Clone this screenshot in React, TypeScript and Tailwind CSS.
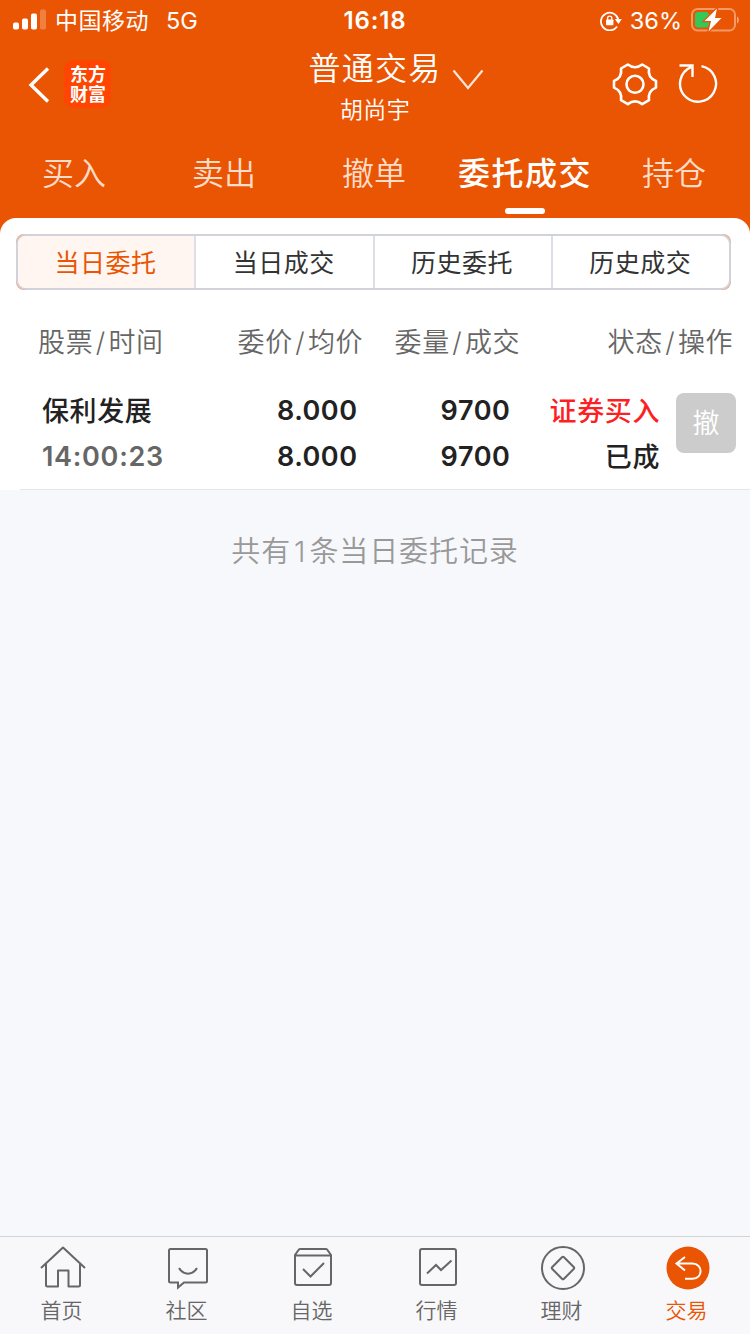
import React from "react";

const sans = "font-['Inter','Noto_Sans_CJK_SC',sans-serif]";

const tabs = ["买入", "卖出", "撤单", "委托成交", "持仓"];
const segments = ["当日委托", "当日成交", "历史委托", "历史成交"];

function StatusBar() {
  return (
    <div className="flex h-10 items-center text-white">
      <div className="flex w-[250px] items-center pl-[13px]">
        <svg width="33" height="22" viewBox="0 0 33 22" fill="#fff">
          <rect x="0" y="13.5" width="6" height="7" rx="1.8" />
          <rect x="9" y="9.500" width="6" height="11" rx="1.8" />
          <rect x="18" y="4.500" width="6" height="16" rx="1.8" />
          <rect x="27" y="0.500" width="6" height="20" rx="1.8" opacity="0.25" />
        </svg>
        <span className="ml-[9px] pt-0.5 text-[23px] leading-10 tracking-[0.5px] whitespace-nowrap">中国移动</span>
        <span className="ml-[17px] pt-0.5 text-[23.500px] leading-10">5G</span>
      </div>
      <div className="w-[250px] pt-0.5 text-center text-[24px] leading-10 font-semibold tracking-[0.9px]">16:18</div>
      <div className="flex w-[250px] items-center justify-end pr-[11px]">
        <svg className="mr-[8px] mt-0.5" width="22" height="20" viewBox="0 0 22 20" fill="none" stroke="#fff">
          <path d="M17 15.5A8.800 8.800 0 1 1 18.300 8.500" strokeWidth="1.8" />
          <path d="M14.800 8H21.800L18.500 13Z" fill="#fff" stroke="none" />
          <rect x="6" y="8.500" width="7.400" height="5.800" rx="0.8" fill="#fff" stroke="none" />
          <path d="M7.600 9V7.200a2.100 2.100 0 0 1 4.200 0V9" strokeWidth="1.3" />
        </svg>
        <span className="mr-[9px] pt-0.5 text-[23.500px] leading-10">36%</span>
        <svg width="48" height="24" viewBox="0 0 48 24">
          <rect x="1" y="1" width="43" height="21.5" rx="5.5" fill="none" stroke="#fff" strokeOpacity="0.4" strokeWidth="2" />
          <path d="M46 8.5c2.4 1 2.4 6 0 7Z" fill="#fff" fillOpacity="0.5" />
          <rect x="4" y="4" width="14" height="15.5" rx="3" fill="#34c759" />
          <path d="M26 0.5L13.5 13H20L17.5 23.5L30.500 10H24Z" fill="#fff" stroke="#ea5504" strokeWidth="2.4" paintOrder="stroke" />
        </svg>
      </div>
    </div>
  );
}

function TitleBar() {
  return (
    <div className="flex h-[90px] text-white">
      <div className="flex w-[250px] items-start pt-5 pl-7">
        <svg className="mt-[7px]" width="22" height="36" viewBox="0 0 22 36" fill="none" stroke="#fff" strokeWidth="3.4">
          <path d="M20 1.500L3 18L20 34.500" />
        </svg>
        <div className="ml-[14px] flex h-12 w-[47px] flex-col items-center justify-center rounded-[9px] bg-[#ff4600] pt-px pl-px text-[18px] leading-[20px] font-bold">
          <span>东方</span>
          <span>财富</span>
        </div>
      </div>
      <div className="flex w-[250px] justify-center">
        <div className="flex w-[134px] shrink-0 flex-col items-center">
          <span className="mt-[8px] text-[32px] leading-[42px] font-[350] tracking-[1.3px] whitespace-nowrap">普通交易</span>
          <span className="mt-[3px] text-[23px] leading-[34px] font-[350] tracking-[0.4px]">胡尚宇</span>
        </div>
      </div>
      <div className="flex w-[250px] items-start pt-[22px]">
        <svg className="-ml-12 mt-[7px] shrink-0" width="32" height="22" viewBox="0 0 32 22" fill="none" stroke="#fff" strokeOpacity="0.85" strokeWidth="2.2">
          <path d="M1.500 1.500L16 19L30.500 1.500" />
        </svg>
        <svg className="ml-[128px] shrink-0" width="46" height="46" viewBox="0 0 46 46" fill="none" stroke="#fff" strokeWidth="2.600" strokeLinejoin="round">
          <path d="M2 19Q10.500 15.500 9 6.500L15.800 2.500Q23 8 30.200 2.500L37 6.500Q35.500 15.500 44 19V25.600Q35.500 29.100 37 38.100L30.200 42.100Q23 36.600 15.800 42.100L9 38.100Q10.500 29.100 2 25.600Z" />
          <circle cx="23" cy="22.300" r="8.500" />
        </svg>
        <svg className="ml-[19px] mt-px shrink-0" width="42" height="42" viewBox="0 0 42 42" fill="none" stroke="#fff" strokeWidth="2.400">
          <path d="M24.500 3.100A18 18 0 1 1 14 4.200M2.500 2.500H15.500V14" />
        </svg>
      </div>
    </div>
  );
}

function Tabs() {
  return (
    <div className="grid h-[88px] grid-cols-5">
      {tabs.map((t) =>
        t === "委托成交" ? (
          <div key={t} className="flex flex-col items-center text-white">
            <span className="mt-[20px] text-[32px] leading-[48px] font-medium tracking-[1.5px]">{t}</span>
            <span className="mt-[10px] h-1.5 w-10 rounded-full bg-white" />
          </div>
        ) : (
          <div key={t} className="mt-[20px] -ml-0.5 text-center text-[32px] leading-[48px] font-[350] text-[#ffdcc9]">{t}</div>
        ),
      )}
    </div>
  );
}

function Segments() {
  return (
    <div className="mr-[19px] ml-4 h-14 overflow-hidden rounded-[8px] bg-[#f0a585]">
      <div className="flex h-14 overflow-hidden rounded-[10px] border-2 border-[#d0d4da] bg-white">
        {segments.map((s, i) => (
          <div
            key={s}
            className={
              i === 0
                ? "flex-1 bg-[#fff5f1] pt-px pr-px text-center text-[25px] leading-[52px] tracking-[0.5px] text-[#ea5504]"
                : "flex-1 border-l-2 border-[#dcdfe5] pt-px pr-px text-center text-[25px] leading-[52px] tracking-[0.5px] text-[#333]"
            }
          >
            {s}
          </div>
        ))}
      </div>
    </div>
  );
}

function Pair({ a, b }: { a: string; b: string }) {
  return (
    <span className="flex whitespace-nowrap">
      <span>{a}</span>
      <span className="mx-0.5 w-[11px] text-center">/</span>
      <span>{b}</span>
    </span>
  );
}

function Orders() {
  return (
    <>
      <div className="flex h-[42px] pl-[38px] text-[27px] leading-[42px] font-[350] tracking-[0.7px] text-[#666]">
        <div className="w-[199.500px]"><Pair a="股票" b="时间" /></div>
        <div className="w-[157px]"><Pair a="委价" b="均价" /></div>
        <div className="w-[213px]"><Pair a="委量" b="成交" /></div>
        <div><Pair a="状态" b="操作" /></div>
      </div>
      <div className="mt-[24px] flex h-[101px] text-[27px] leading-[46px] font-semibold text-[#222]">
        <div className="w-[200px] pl-[42px]">
          <div className="pt-px leading-[45px] font-medium tracking-[0.6px]">保利发展</div>
          <div className="tracking-[0.7px] text-[#666]">14:00:23</div>
        </div>
        <div className="w-[157.500px] text-right tracking-[0.5px]">
          <div>8.000</div>
          <div>8.000</div>
        </div>
        <div className="w-[153px] text-right tracking-[0.6px]">
          <div>9700</div>
          <div>9700</div>
        </div>
        <div className="w-[149.500px] pt-px text-right font-medium tracking-[0.6px]">
          <div className="text-[#fd1f24]">证券买入</div>
          <div>已成</div>
        </div>
        <div className="mt-[5px] ml-4 h-[60px] w-[60px] rounded-lg bg-[#ccc] pt-px text-center text-[27px] leading-[60px] font-[350] text-white">撤</div>
      </div>
      <div className="ml-5 h-px bg-[#e6e7ea]" />
    </>
  );
}

const home = (
  <svg width="46" height="44" viewBox="0 0 46 44" fill="none" stroke="#666" strokeWidth="2">
    <path d="M1 22L23 1.500L45 22M6 18V39Q6 40.500 7.500 40.500H18V24.500H28.500V40.500H38.500Q40 40.500 40 39V18" strokeLinejoin="round" />
  </svg>
);
const chat = (
  <svg width="46" height="44" viewBox="0 0 46 44" fill="none" stroke="#666" strokeWidth="2">
    <path d="M5.500 3H40.500Q42 3 42 4.500V35Q42 36.500 40.500 36.500H19L13 41.500V36.500H5.500Q4 36.500 4 35V4.500Q4 3 5.500 3Z" />
    <path d="M14 22C18.500 29.500 27.500 29.500 32 22" />
  </svg>
);
const box = (
  <svg width="46" height="44" viewBox="0 0 46 44" fill="none" stroke="#666" strokeWidth="2">
    <path d="M5 9L8.500 4Q9 3 10 3H36Q37 3 37.500 4L41 9V37Q41 39 39 39H7Q5 39 5 37ZM5 9.500H41M13 23L20.500 30.500L34 17" />
  </svg>
);
const chart = (
  <svg width="46" height="44" viewBox="0 0 46 44" fill="none" stroke="#666" strokeWidth="2">
    <rect x="5" y="3" width="36" height="36" rx="2" />
    <path d="M12 27.500L21 19L26 24L36.500 14.500" />
  </svg>
);
const coin = (
  <svg width="46" height="44" viewBox="0 0 46 44" fill="none" stroke="#666" strokeWidth="2">
    <circle cx="23" cy="22" r="21" />
    <path d="M22 11.300Q23 10.300 24 11.300L33.700 21Q34.700 22 33.700 23L24 32.700Q23 33.700 22 32.700L12.300 23Q11.300 22 12.300 21Z" />
  </svg>
);
const trade = (
  <svg width="46" height="44" viewBox="0 0 46 44" fill="none" stroke="#fff" strokeWidth="2">
    <circle cx="23" cy="22" r="21.500" fill="#ea5504" stroke="none" />
    <path d="M20 11L11.500 17.500L20 24.500M11.500 17.500H27.500C38 17.500 38.500 32.700 27.500 32.700H20" />
  </svg>
);

const nav = [
  { label: "首页", icon: home },
  { label: "社区", icon: chat },
  { label: "自选", icon: box },
  { label: "行情", icon: chart },
  { label: "理财", icon: coin },
  { label: "交易", icon: trade },
];

function BottomNav() {
  return (
    <div className="grid h-[98px] grid-cols-6 border-t border-[#d2d3d6] bg-[#f8f8fb]">
      {nav.map((n) => (
        <div key={n.label} className="flex flex-col items-center pt-[9px]">
          {n.icon}
          <span className={n.label === "交易" ? "mt-[5px] pr-0.5 text-[21px] leading-8 font-[350] text-[#ea5504]" : "mt-[5px] pr-0.5 text-[21px] leading-8 font-[350] text-[#666]"}>
            {n.label}
          </span>
        </div>
      ))}
    </div>
  );
}

export default function App() {
  return (
    <div className={`${sans} flex h-[1334px] w-[750px] flex-col overflow-hidden bg-[#f7f8fb]`}>
      <div className="bg-[#ea5504]">
        <StatusBar />
        <TitleBar />
        <Tabs />
        <div className="h-[272px] rounded-t-[16px] bg-white pt-4">
          <Segments />
          <div className="h-8" />
          <Orders />
        </div>
      </div>
      <div className="mt-[39px] flex-1 text-center text-[29px] leading-[46px] font-[350] tracking-[0.9px] text-[#999]">
        共有<span className="mx-[3px]">1</span>条当日委托记录
      </div>
      <BottomNav />
    </div>
  );
}
